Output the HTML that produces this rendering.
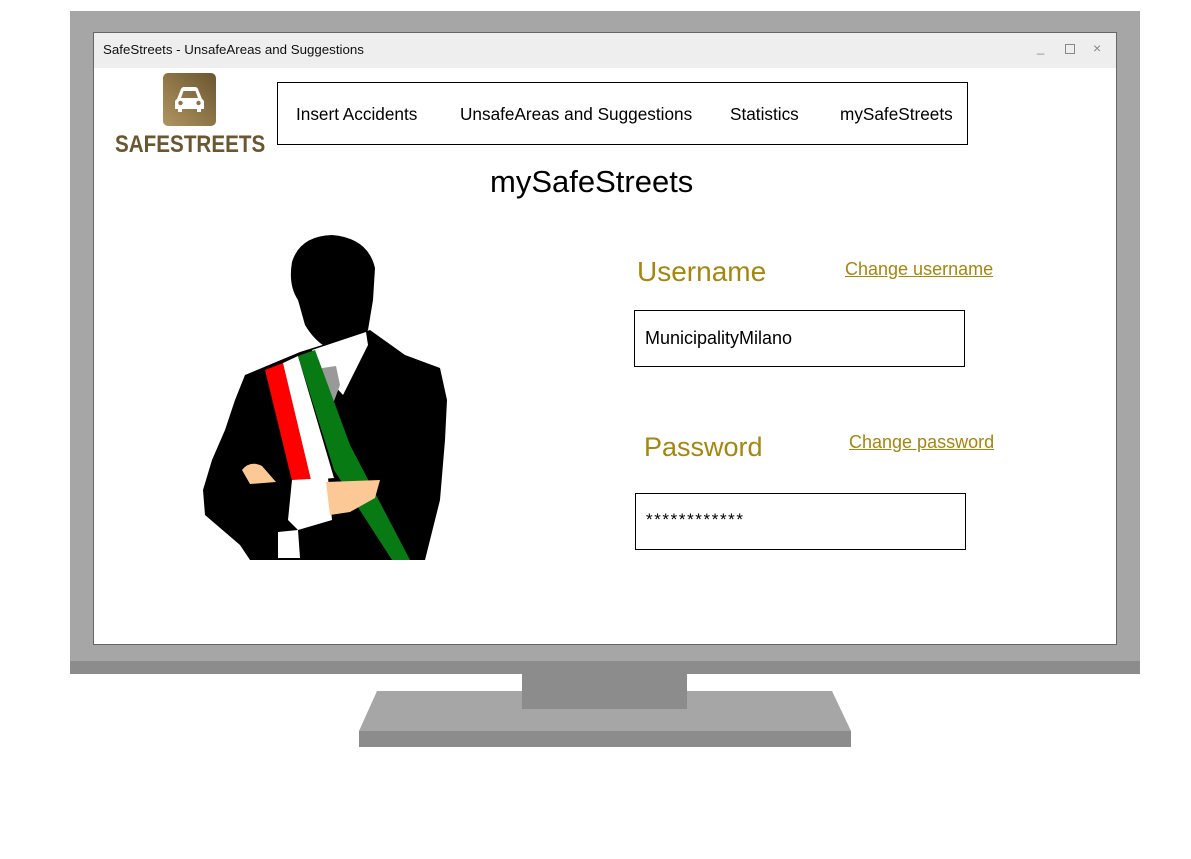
<!DOCTYPE html>
<html><head><meta charset="utf-8"><style>
*{margin:0;padding:0;box-sizing:border-box}
body{width:1191px;height:859px;background:#fff;position:relative;overflow:hidden;font-family:"Liberation Sans",sans-serif}
.a{position:absolute}
.t{position:absolute;white-space:nowrap}
.gold{color:#a5860e}
.link{color:#a5860e;text-decoration:underline;font-size:18px}
.nav{font-size:17.2px;top:104px}
</style></head><body>
<div class="a" style="left:70px;top:11px;width:1070px;height:650px;background:#a6a6a6"></div>
<div class="a" style="left:70px;top:661px;width:1070px;height:13px;background:#8c8c8c"></div>
<svg class="a" style="left:0;top:0" width="1191" height="859"><polygon points="377,691 832,691 851,731 359,731" fill="#a6a6a6"/><rect x="359" y="731" width="492" height="16" fill="#8c8c8c"/></svg>
<div class="a" style="left:522px;top:674px;width:165px;height:35px;background:#8c8c8c"></div>
<div class="a" style="left:93px;top:32px;width:1024px;height:613px;background:#fff;border:1px solid #666"></div>
<div class="a" style="left:94px;top:33px;width:1022px;height:35px;background:#eeeeee"></div>
<div class="t" style="left:103px;top:42px;font-size:13.3px;color:#111">SafeStreets - UnsafeAreas and Suggestions</div>
<div class="t" style="left:1037px;top:40px;font-size:13px;color:#888">_</div>
<div class="a" style="left:1065px;top:44px;width:10px;height:10px;border:1px solid #888"></div>
<div class="t" style="left:1093px;top:40px;font-size:14px;color:#888">×</div>
<svg class="a" style="left:163px;top:73px" width="53" height="53"><defs><linearGradient id="g" x1="0" y1="1" x2="1" y2="0"><stop offset="0" stop-color="#b09560"/><stop offset="1" stop-color="#6b5630"/></linearGradient></defs><rect width="53" height="53" rx="5" fill="url(#g)"/><path d="M14 26 L18 16 Q19 14 21 14 L32 14 Q34 14 35 16 L39 26 Q41 27 41 29 L41 36 L38 36 L38 39 L34 39 L34 36 L19 36 L19 39 L15 39 L15 36 L12 36 L12 29 Q12 27 14 26Z M18 25 L35 25 L32.5 18 L20.5 18Z" fill="#fff" fill-rule="evenodd"/><circle cx="17.5" cy="30" r="2.2" fill="#8a7345"/><circle cx="35.5" cy="30" r="2.2" fill="#8a7345"/></svg>
<div class="t" style="left:115px;top:131px;font-size:24px;color:#6b5630;font-weight:bold;transform:scaleX(0.86);transform-origin:left top">SAFESTREETS</div>
<div class="a" style="left:277px;top:82px;width:691px;height:63px;border:1px solid #000"></div>
<div class="t nav" style="left:296px">Insert Accidents</div>
<div class="t nav" style="left:460px">UnsafeAreas and Suggestions</div>
<div class="t nav" style="left:730px">Statistics</div>
<div class="t nav" style="left:840px">mySafeStreets</div>
<div class="t" style="left:490px;top:164px;font-size:31px">mySafeStreets</div>
<svg class="a" style="left:0;top:0" width="1191" height="859">
<polygon points="245,375 300,352 370,330 405,355 440,368 447,400 445,440 440,500 425,560 250,560 240,545 205,515 203,490 212,460 225,430 235,400" fill="#000"/>
<path d="M292 262 Q300 236 332 235 Q368 238 375 268 L373 300 L368 330 Q355 350 338 352 Q318 347 305 325 L298 300 Q288 285 292 262Z" fill="#000"/>
<polygon points="312,350 366,332 368,345 343,395 322,372" fill="#fff"/>
<polygon points="322,368 336,366 340,385 330,412 320,385" fill="#999"/>
<polygon points="265,370 283,363 311,480 293,485" fill="#f00"/>
<polygon points="283,363 298,356 334,478 311,480" fill="#fff"/>
<polygon points="298,356 315,350 350,445 410,560 392,560 334,470" fill="#087a14"/>
<path d="M242 470 Q250 460 262 466 L276 482 L250 484Z" fill="#fcc896"/>
<polygon points="292,480 328,478 332,520 298,530 288,520" fill="#fff"/>
<path d="M326 482 L380 480 L375 498 L350 512 L330 515Z" fill="#fcc896"/>
<polygon points="278,532 298,530 300,558 278,558" fill="#fff"/>
</svg>
<div class="t gold" style="left:637px;top:256px;font-size:28px">Username</div>
<div class="t link" style="left:845px;top:259px">Change username</div>
<div class="a" style="left:634px;top:310px;width:331px;height:57px;border:1px solid #000"></div>
<div class="t" style="left:645px;top:328px;font-size:18px">MunicipalityMilano</div>
<div class="t gold" style="left:644px;top:432px;font-size:27px">Password</div>
<div class="t link" style="left:849px;top:432px">Change password</div>
<div class="a" style="left:635px;top:493px;width:331px;height:57px;border:1px solid #000"></div>
<div class="t" style="left:646px;top:510px;font-size:17px;letter-spacing:1.6px">************</div>
</body></html>
